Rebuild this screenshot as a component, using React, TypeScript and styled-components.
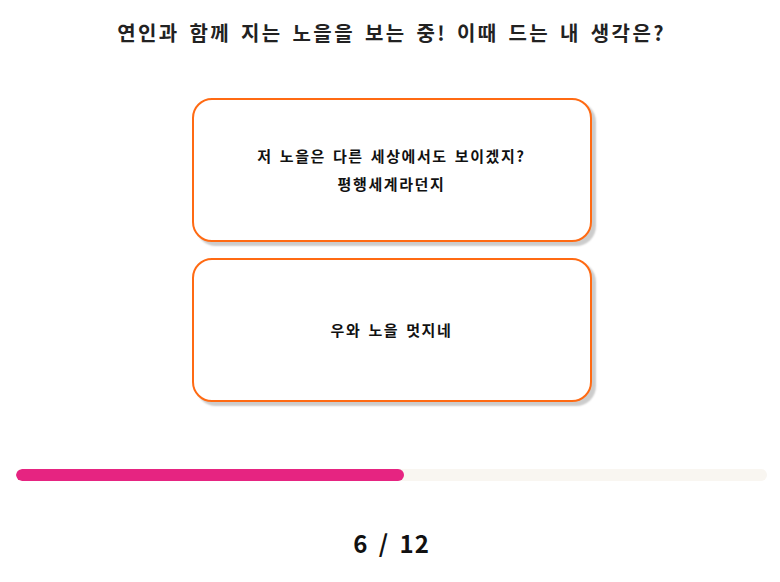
import * as React from "react";
import styled, { createGlobalStyle } from "styled-components";

const GlobalStyle = createGlobalStyle`
  html, body {
    margin: 0;
    padding: 0;
    background: #ffffff;
  }
  body {
    font-family: "Noto Sans CJK KR", "Noto Sans", sans-serif;
    color: #222222;
  }
`;

const Page = styled.main`
  display: flex;
  flex-direction: column;
  align-items: center;
  margin: 0 13px 0 16px;
  height: 582px;
`;

const Question = styled.h1`
  margin: 18px 0 0;
  font-size: 20px;
  line-height: 30px;
  font-weight: 700;
  color: #222222;
  letter-spacing: 2.4px;
  word-spacing: 3px;
`;

const Answers = styled.div`
  display: flex;
  flex-direction: column;
  gap: 16px;
  margin-top: 50px;
`;

const AnswerButton = styled.button`
  width: 400px;
  height: 144px;
  display: flex;
  align-items: center;
  justify-content: center;
  box-sizing: border-box;
  background: #ffffff;
  border: 2px solid #ff6a13;
  border-radius: 20px;
  box-shadow: 4px 4px 2px rgba(0, 0, 0, 0.2);
  font-family: inherit;
  font-size: 15px;
  font-weight: 700;
  line-height: 28px;
  letter-spacing: 1.6px;
  word-spacing: 2px;
  color: #111111;
  cursor: pointer;
  white-space: pre-line;
  padding: 0;
`;

const ProgressTrack = styled.div`
  align-self: stretch;
  height: 12px;
  margin-top: 67px;
  border-radius: 6px;
  background: #f9f6f1;
  overflow: hidden;
`;

const ProgressFill = styled.div`
  height: 100%;
  border-radius: 6px;
  background: #e62481;
`;

const Counter = styled.div`
  margin-top: 46px;
  font-size: 24px;
  font-weight: 700;
  line-height: 32px;
  letter-spacing: 1px;
  word-spacing: 4px;
  color: #111111;
`;

const answers = [
  "저 노을은 다른 세상에서도 보이겠지?\n평행세계라던지",
  "우와 노을 멋지네",
];

export default function App() {
  const current = 6;
  const total = 12;
  return (
    <>
      <GlobalStyle />
      <Page>
        <Question>연인과 함께 지는 노을을 보는 중! 이때 드는 내 생각은?</Question>
        <Answers>
          {answers.map((a) => (
            <AnswerButton key={a}>{a}</AnswerButton>
          ))}
        </Answers>
        <ProgressTrack>
          <ProgressFill style={{ width: `${(current / total) * 100 + 1.7}%` }} />
        </ProgressTrack>
        <Counter>
          {current} / {total}
        </Counter>
      </Page>
    </>
  );
}
